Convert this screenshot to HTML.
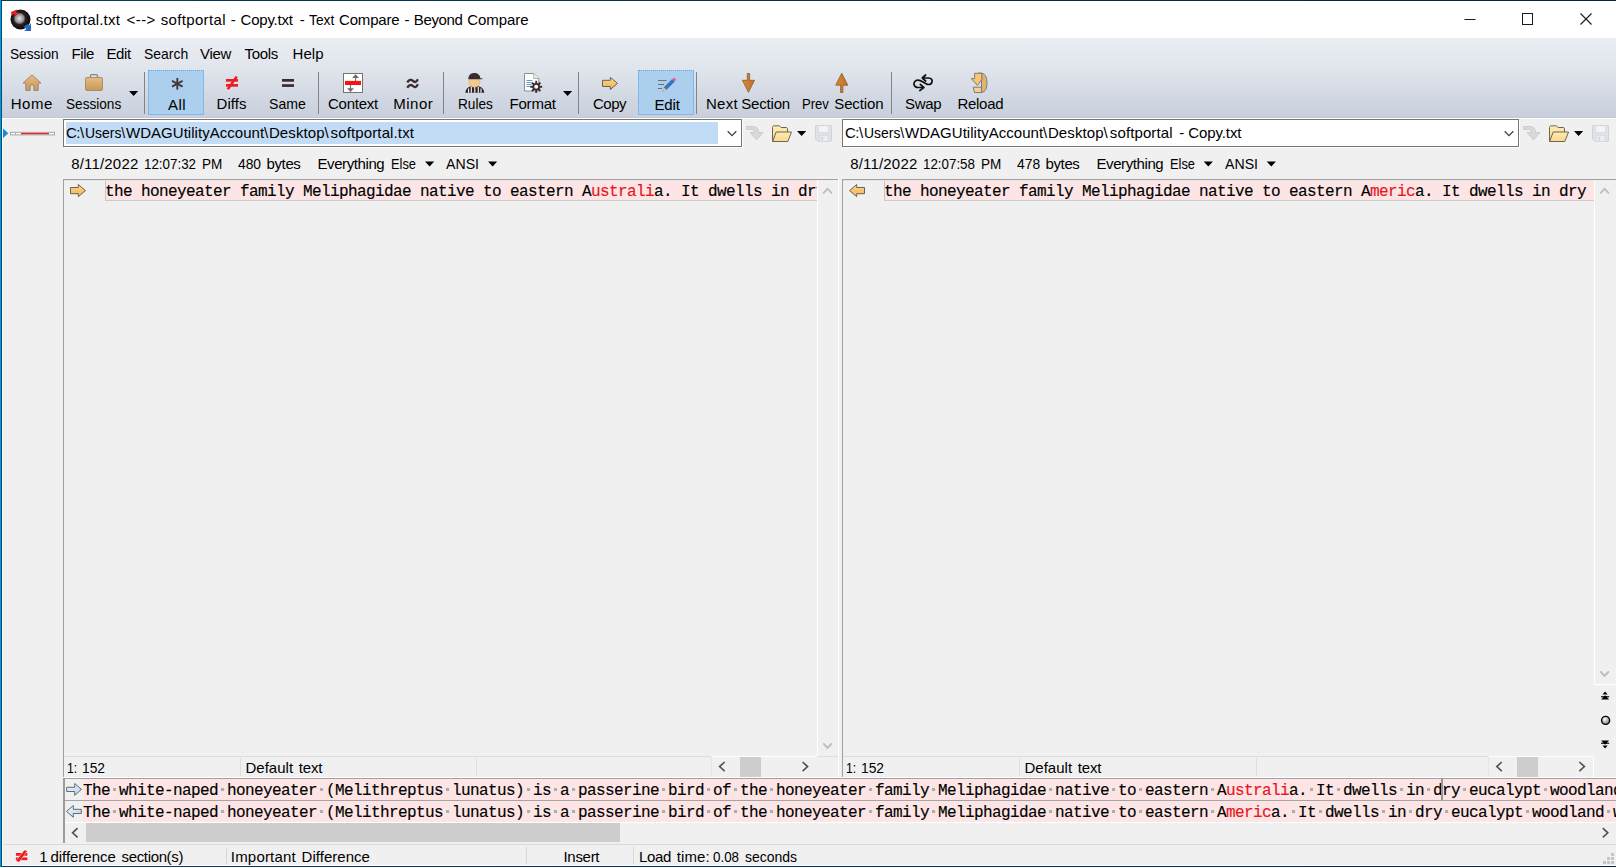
<!DOCTYPE html>
<html lang="en">
<head>
<meta charset="utf-8">
<title>softportal.txt &lt;--&gt; softportal - Copy.txt - Text Compare - Beyond Compare</title>
<style>
html,body{margin:0;padding:0;}
body{width:1616px;height:867px;overflow:hidden;background:#f0f0f0;position:relative;
  font-family:"Liberation Sans",sans-serif;font-size:15px;color:#000;}
.abs{position:absolute;}
.w{position:absolute;top:0;white-space:pre;}
.t{position:absolute;white-space:nowrap;line-height:20px;height:20px;}
.mono{font-family:"Liberation Mono",monospace;font-size:16px;letter-spacing:-0.6016px;-webkit-text-stroke:0.15px currentColor;white-space:pre;position:absolute;line-height:20px;height:20px;}
.red{color:#e8141e;}
.mono i{font-style:normal;color:#a6b1ad;position:relative;top:-1px;background:linear-gradient(#a6b1ad,#a6b1ad) no-repeat 3px 7px / 3px 3px;}
#frame-l{left:0;top:0;width:2px;height:867px;background:linear-gradient(90deg,#009adf 0,#009adf 1px,#0c4a6e 1px,#0c4a6e 2px);}
#frame-t{left:1px;top:0;width:1615px;height:1px;background:linear-gradient(90deg,#043c5c,#05224a);}
#frame-b{left:1px;top:866px;width:1615px;height:1px;background:linear-gradient(90deg,#043c5c,#05224a);}
#frame-w{left:2px;top:865px;width:1614px;height:1px;background:#fff;}
#frame-wl{left:2px;top:118px;width:1px;height:748px;background:#fff;}
#titlebar{left:2px;top:1px;width:1614px;height:37px;background:#fff;}
#chrome{left:2px;top:38px;width:1614px;height:80px;background:linear-gradient(#eaeef3 0%,#e4e8ee 28%,#d8dde6 60%,#c8cfdb 100%);}
#chrome-line{left:2px;top:117px;width:1614px;height:2px;background:linear-gradient(#c0c9d5 0,#c0c9d5 1px,#fff 1px,#fff 2px);}
.sep{position:absolute;top:72px;width:1px;height:42px;background:#7f838b;}
.tbtn-on{position:absolute;top:70px;height:45px;background:#abcfec;border:1px solid #7db9ee;border-top:1px dotted #5ba7e8;box-sizing:border-box;}
.lbl{position:absolute;white-space:nowrap;line-height:20px;height:20px;top:94px;font-size:15px;}
.box{position:absolute;background:#fff;border:1px solid #767676;box-sizing:border-box;height:28px;top:119px;box-shadow:1px 1px 0 #fff;}
.pane{position:absolute;background:#f0f0f0;}
.vline{position:absolute;width:1px;}
.hline{position:absolute;height:1px;}
.pink{position:absolute;background:#fde5e5;}
.sb{position:absolute;background:#f0f0f0;}
.thumb{position:absolute;background:#cdcdcd;}
svg{position:absolute;overflow:visible;}
</style>
</head>
<body>
<!-- window frame -->
<div class="abs" id="titlebar"></div>
<div class="abs" id="chrome"></div>
<div class="abs" id="chrome-line"></div>

<!-- title -->
<div class="t" id="title" style="left:0px;top:10px;"><span class="w" id="titlew0" style="left:35.71px;letter-spacing:0.184px;">softportal.txt</span> <span class="w" id="titlew1" style="left:126.53px;letter-spacing:0.443px;">&lt;--&gt;</span> <span class="w" id="titlew2" style="left:160.71px;letter-spacing:0.343px;">softportal</span> <span class="w" id="titlew3" style="left:230.78px;letter-spacing:0px;">-</span> <span class="w" id="titlew4" style="left:240.54px;letter-spacing:-0.219px;">Copy.txt</span> <span class="w" id="titlew5" style="left:299.65px;letter-spacing:0px;">-</span> <span class="w" id="titlew6" style="left:308.51px;transform-origin:0 0;transform:scaleX(0.9181);">Text</span> <span class="w" id="titlew7" style="left:339.07px;letter-spacing:-0.199px;">Compare</span> <span class="w" id="titlew8" style="left:404.61px;letter-spacing:0px;">-</span> <span class="w" id="titlew9" style="left:413.84px;letter-spacing:-0.378px;">Beyond</span> <span class="w" id="titlew10" style="left:467.3px;letter-spacing:-0.074px;">Compare</span></div>

<!-- menu -->
<div class="t" id="m1" style="left:9.77px;top:44px;transform-origin:0 0;transform:scaleX(0.9108);">Session</div>
<div class="t" id="m2" style="left:71.5px;top:44px;letter-spacing:-0.417px;">File</div>
<div class="t" id="m3" style="left:106.5px;top:44px;letter-spacing:-0.417px;">Edit</div>
<div class="t" id="m4" style="left:143.96px;top:44px;transform-origin:0 0;transform:scaleX(0.9304);">Search</div>
<div class="t" id="m5" style="left:200px;top:44px;letter-spacing:-0.333px;">View</div>
<div class="t" id="m6" style="left:244.5px;top:44px;letter-spacing:-0.312px;">Tools</div>
<div class="t" id="m7" style="left:292.5px;top:44px;letter-spacing:0.083px;">Help</div>

<!-- toolbar -->
<div class="tbtn-on" style="left:148px;width:56px;"></div>
<div class="tbtn-on" style="left:638px;width:56px;"></div>
<div class="sep" style="left:144px;"></div>
<div class="sep" style="left:318px;"></div>
<div class="sep" style="left:443px;"></div>
<div class="sep" style="left:578px;"></div>
<div class="sep" style="left:696px;"></div>
<div class="sep" style="left:891px;"></div>

<div class="lbl" id="l1" style="left:10.75px;letter-spacing:0.5px;">Home</div>
<div class="lbl" id="l2" style="left:65.98px;transform-origin:0 0;transform:scaleX(0.9069);">Sessions</div>
<div class="lbl" id="l3" style="left:168px;top:95px;letter-spacing:0.5px;">All</div>
<div class="lbl" id="l4" style="left:216.5px;letter-spacing:0.062px;">Diffs</div>
<div class="lbl" id="l5" style="left:269.2px;transform-origin:0 0;transform:scaleX(0.938);">Same</div>
<div class="lbl" id="l6" style="left:328px;letter-spacing:-0.25px;">Context</div>
<div class="lbl" id="l7" style="left:393.25px;letter-spacing:0.5px;">Minor</div>
<div class="lbl" id="l8" style="left:457.78px;transform-origin:0 0;transform:scaleX(0.9096);">Rules</div>
<div class="lbl" id="l9" style="left:509.5px;letter-spacing:-0.2px;">Format</div>
<div class="lbl" id="l10" style="left:593px;letter-spacing:-0.5px;">Copy</div>
<div class="lbl" id="l11" style="left:654.5px;top:95px;letter-spacing:-0.167px;">Edit</div>
<div class="lbl" id="l12" style="left:0px;"><span class="w" id="l12w0" style="left:705.97px;letter-spacing:0.247px;">Next</span> <span class="w" id="l12w1" style="left:741.25px;letter-spacing:-0.183px;">Section</span></div>
<div class="lbl" id="l13" style="left:0px;"><span class="w" id="l13w0" style="left:801.93px;transform-origin:0 0;transform:scaleX(0.8721);">Prev</span> <span class="w" id="l13w1" style="left:834.25px;letter-spacing:-0.128px;">Section</span></div>
<div class="lbl" id="l14" style="left:905px;letter-spacing:-0.33px;">Swap</div>
<div class="lbl" id="l15" style="left:957.5px;letter-spacing:-0.3px;">Reload</div>

<!-- path row -->
<div class="box" style="left:63px;width:679px;"></div>
<div class="abs" style="left:66px;top:122px;width:652px;height:22px;background:#c2dcf5;"></div>
<div class="t" id="p1" style="left:0px;top:123px;"><span class="w" id="p1w0" style="left:65.98px;letter-spacing:-0.433px;">C:\</span> <span class="w" id="p1w1" style="left:85.47px;transform-origin:0 0;transform:scaleX(0.9285);">Users\</span> <span class="w" id="p1w2" style="left:126.02px;letter-spacing:0.032px;">WDAGUtilityAccount\</span> <span class="w" id="p1w3" style="left:268.94px;letter-spacing:0.094px;">Desktop\</span> <span class="w" id="p1w4" style="left:330.58px;letter-spacing:0.128px;">softportal.txt</span></div>
<div class="box" style="left:842px;width:677px;"></div>
<div class="t" id="p2" style="left:0px;top:123px;"><span class="w" id="p2w0" style="left:844.98px;letter-spacing:-0.433px;">C:\</span> <span class="w" id="p2w1" style="left:864.47px;transform-origin:0 0;transform:scaleX(0.9285);">Users\</span> <span class="w" id="p2w2" style="left:905.02px;letter-spacing:0.032px;">WDAGUtilityAccount\</span> <span class="w" id="p2w3" style="left:1047.94px;letter-spacing:0.094px;">Desktop\</span> <span class="w" id="p2w4" style="left:1109.84px;letter-spacing:0.112px;">softportal</span> <span class="w" id="p2w5" style="left:1179.26px;letter-spacing:0px;">-</span> <span class="w" id="p2w6" style="left:1188.26px;letter-spacing:-0.102px;">Copy.txt</span></div>

<!-- info row -->
<div class="t" id="i1" style="left:0px;top:154px;"><span class="w" id="i1w0" style="left:71.14px;letter-spacing:0.191px;">8/11/2022</span> <span class="w" id="i1w1" style="left:144.33px;transform-origin:0 0;transform:scaleX(0.8908);">12:07:32</span> <span class="w" id="i1w2" style="left:201.76px;transform-origin:0 0;transform:scaleX(0.9021);">PM</span></div>
<div class="t" id="i2" style="left:0px;top:154px;"><span class="w" id="i2w0" style="left:238.08px;transform-origin:0 0;transform:scaleX(0.921);">480</span> <span class="w" id="i2w1" style="left:266.48px;letter-spacing:-0.362px;">bytes</span></div>
<div class="t" id="i3" style="left:0px;top:154px;"><span class="w" id="i3w0" style="left:317.47px;letter-spacing:-0.405px;">Everything</span> <span class="w" id="i3w1" style="left:390.88px;transform-origin:0 0;transform:scaleX(0.8578);">Else</span></div>
<div class="t" id="i4" style="left:446.18px;top:154px;transform-origin:0 0;transform:scaleX(0.9422);">ANSI</div>
<div class="t" id="i5" style="left:0px;top:154px;"><span class="w" id="i5w0" style="left:850.14px;letter-spacing:0.191px;">8/11/2022</span> <span class="w" id="i5w1" style="left:923.33px;transform-origin:0 0;transform:scaleX(0.8901);">12:07:58</span> <span class="w" id="i5w2" style="left:980.76px;transform-origin:0 0;transform:scaleX(0.9021);">PM</span></div>
<div class="t" id="i6" style="left:0px;top:154px;"><span class="w" id="i6w0" style="left:1017.08px;transform-origin:0 0;transform:scaleX(0.9255);">478</span> <span class="w" id="i6w1" style="left:1045.48px;letter-spacing:-0.362px;">bytes</span></div>
<div class="t" id="i7" style="left:0px;top:154px;"><span class="w" id="i7w0" style="left:1096.47px;letter-spacing:-0.405px;">Everything</span> <span class="w" id="i7w1" style="left:1169.88px;transform-origin:0 0;transform:scaleX(0.8578);">Else</span></div>
<div class="t" id="i8" style="left:1225.18px;top:154px;transform-origin:0 0;transform:scaleX(0.9422);">ANSI</div>

<!-- panes -->
<div class="hline" style="left:63px;top:179px;width:775px;background:#a0a0a0;"></div>
<div class="hline" style="left:64px;top:180px;width:753px;background:#e6e6e6;"></div>
<div class="vline" style="left:63px;top:179px;height:598px;background:#a0a0a0;"></div>
<div class="hline" style="left:842px;top:179px;width:774px;background:#a0a0a0;"></div>
<div class="hline" style="left:843px;top:180px;width:751px;background:#e6e6e6;"></div>
<div class="vline" style="left:842px;top:179px;height:598px;background:#a0a0a0;"></div>

<div class="pink" style="left:105px;top:181px;width:712px;height:20px;box-sizing:border-box;border-left:1px solid #c6c6c6;border-bottom:1px solid #cbcbcb;"></div>
<div class="mono" id="e1" style="left:105px;top:182px;width:712px;overflow:hidden;">the honeyeater family Meliphagidae native to eastern A<span class="red">ustrali</span>a. It dwells in dry eucalypt</div>
<div class="pink" style="left:884px;top:181px;width:710px;height:20px;box-sizing:border-box;border-left:1px solid #c6c6c6;border-bottom:1px solid #cbcbcb;"></div>
<div class="mono" id="e2" style="left:884px;top:182px;">the honeyeater family Meliphagidae native to eastern A<span class="red">meric</span>a. It dwells in dry</div>

<!-- pane status -->
<div class="hline" style="left:64px;top:756px;width:774px;background:#dcdcdc;"></div>
<div class="hline" style="left:843px;top:756px;width:751px;background:#dcdcdc;"></div>
<div class="t" id="s1" style="left:0px;top:758px;"><span class="w" id="s1w0" style="left:67.05px;transform-origin:0 0;transform:scaleX(0.8166);">1:</span> <span class="w" id="s1w1" style="left:81.96px;transform-origin:0 0;transform:scaleX(0.9194);">152</span></div>
<div class="t" id="s2" style="left:0px;top:758px;"><span class="w" id="s2w0" style="left:245.44px;letter-spacing:0.03px;">Default</span> <span class="w" id="s2w1" style="left:298.71px;letter-spacing:-0.133px;">text</span></div>
<div class="t" id="s3" style="left:0px;top:758px;"><span class="w" id="s3w0" style="left:846.05px;transform-origin:0 0;transform:scaleX(0.8166);">1:</span> <span class="w" id="s3w1" style="left:860.96px;transform-origin:0 0;transform:scaleX(0.9194);">152</span></div>
<div class="t" id="s4" style="left:0px;top:758px;"><span class="w" id="s4w0" style="left:1024.44px;letter-spacing:0.03px;">Default</span> <span class="w" id="s4w1" style="left:1077.71px;letter-spacing:-0.133px;">text</span></div>

<div class="hline" style="left:63px;top:777px;width:1553px;background:#fff;"></div>
<!-- bottom diff -->
<div class="pink" style="left:83px;top:779px;width:1533px;height:43px;"></div>
<div class="hline" style="left:63px;top:778px;width:1553px;background:#a0a0a0;"></div>
<div class="hline" style="left:64px;top:800px;width:1552px;background:#a3a5a4;"></div>
<div class="mono" id="b1" style="left:83px;top:781px;">The<i>·</i>white-naped<i>·</i>honeyeater<i>·</i>(Melithreptus<i>·</i>lunatus)<i>·</i>is<i>·</i>a<i>·</i>passerine<i>·</i>bird<i>·</i>of<i>·</i>the<i>·</i>honeyeater<i>·</i>family<i>·</i>Meliphagidae<i>·</i>native<i>·</i>to<i>·</i>eastern<i>·</i>A<span class="red">ustrali</span>a.<i>·</i>It<i>·</i>dwells<i>·</i>in<i>·</i>dry<i>·</i>eucalypt<i>·</i>woodland</div>
<div class="mono" id="b2" style="left:83px;top:803px;">The<i>·</i>white-naped<i>·</i>honeyeater<i>·</i>(Melithreptus<i>·</i>lunatus)<i>·</i>is<i>·</i>a<i>·</i>passerine<i>·</i>bird<i>·</i>of<i>·</i>the<i>·</i>honeyeater<i>·</i>family<i>·</i>Meliphagidae<i>·</i>native<i>·</i>to<i>·</i>eastern<i>·</i>A<span class="red">meric</span>a.<i>·</i>It<i>·</i>dwells<i>·</i>in<i>·</i>dry<i>·</i>eucalypt<i>·</i>woodland<i>·</i>w</div>


<!-- scrollbars -->
<div class="sb" style="left:817px;top:180px;width:21px;height:576px;border-left:1px solid #fff;box-sizing:border-box;"></div>
<div class="vline" style="left:838px;top:179px;height:598px;background:#fff;"></div>
<div class="sb" style="left:1594px;top:180px;width:22px;height:505px;border-left:1px solid #fff;border-bottom:1px solid #fff;box-sizing:border-box;"></div>
<div class="sb" style="left:711px;top:756px;width:106px;height:21px;border-top:1px solid #fff;border-left:1px solid #e6e6e6;box-sizing:border-box;"></div>
<div class="thumb" style="left:740px;top:757px;width:21px;height:20px;"></div>
<div class="sb" style="left:1488px;top:756px;width:106px;height:21px;border-top:1px solid #fff;border-left:1px solid #e6e6e6;border-right:1px solid #fff;box-sizing:border-box;"></div>
<div class="thumb" style="left:1517px;top:757px;width:21px;height:20px;"></div>
<div class="vline" style="left:240px;top:758px;height:18px;background:#dedede;"></div>
<div class="vline" style="left:1019px;top:758px;height:18px;background:#dedede;"></div>
<div class="vline" style="left:1256px;top:758px;height:18px;background:#dedede;"></div>
<div class="vline" style="left:476px;top:758px;height:18px;background:#dedede;"></div>
<!-- bottom scrollbar -->
<div class="hline" style="left:65px;top:822px;width:1551px;background:#fff;"></div>
<div class="thumb" style="left:86px;top:823px;width:534px;height:19px;"></div>
<div class="abs" style="left:63px;top:778px;width:2px;height:65px;background:#9c9c9c;"></div>
<!-- status separators -->
<div class="vline" style="left:226px;top:847px;height:17px;background:#d7d7d7;"></div>
<div class="vline" style="left:526px;top:847px;height:17px;background:#d7d7d7;"></div>
<div class="vline" style="left:633px;top:847px;height:17px;background:#d7d7d7;"></div>
<!-- status bar -->
<div class="hline" style="left:2px;top:844px;width:1614px;background:#dadada;"></div>
<div class="t" id="st1" style="left:0px;top:847px;"><span class="w" id="st1w0" style="left:39.24px;letter-spacing:0px;">1</span> <span class="w" id="st1w1" style="left:50.39px;letter-spacing:-0.023px;">difference</span> <span class="w" id="st1w2" style="left:121.58px;letter-spacing:-0.356px;">section(s)</span></div>
<div class="t" id="st2" style="left:0px;top:847px;"><span class="w" id="st2w0" style="left:230.84px;letter-spacing:0.188px;">Important</span> <span class="w" id="st2w1" style="left:301.58px;letter-spacing:0.023px;">Difference</span></div>
<div class="t" id="st3" style="left:563.5px;top:847px;letter-spacing:-0.3px;">Insert</div>
<div class="t" id="st4" style="left:0px;top:847px;"><span class="w" id="st4w0" style="left:638.95px;letter-spacing:-0.35px;">Load</span> <span class="w" id="st4w1" style="left:676.66px;letter-spacing:0.134px;">time:</span> <span class="w" id="st4w2" style="left:713.28px;transform-origin:0 0;transform:scaleX(0.8925);">0.08</span> <span class="w" id="st4w3" style="left:744.74px;transform-origin:0 0;transform:scaleX(0.9321);">seconds</span></div>

<!-- ICONS: toolbar -->
<svg id="ico-toolbar" width="1616" height="120" style="left:0;top:0" viewBox="0 0 1616 120">
<defs>
<linearGradient id="gTan" x1="0" y1="0" x2="0" y2="1"><stop offset="0" stop-color="#e9bd7f"/><stop offset="1" stop-color="#c4975a"/></linearGradient>
<linearGradient id="gYel" x1="0" y1="0" x2="0" y2="1"><stop offset="0" stop-color="#fdd88a"/><stop offset="1" stop-color="#f3b152"/></linearGradient>
<linearGradient id="gOr" x1="0" y1="0" x2="1" y2="0"><stop offset="0" stop-color="#d98a3c"/><stop offset="1" stop-color="#c06f22"/></linearGradient>
<radialGradient id="gDisc" cx="0.45" cy="0.45" r="0.5"><stop offset="0" stop-color="#e8e8e8"/><stop offset="0.45" stop-color="#8a8a8a"/><stop offset="0.6" stop-color="#2a2022"/><stop offset="1" stop-color="#120c0e"/></radialGradient>
</defs>
<!-- app icon -->
<circle cx="20.5" cy="19.5" r="10" fill="url(#gDisc)"/>
<path d="M11 12 l6 -2.5 l-1 2.5 l3 1 l-4 3 l-1 -2 l-2.5 2 z" fill="#e0202a"/>
<path d="M31 23 l0 8 l-7 0 l2.5 -2 l-3 -2 l4 -3 l1.5 1.5 z" fill="#2468c0"/>
<!-- window controls -->
<path d="M1464.500 19.5 h11" stroke="#1a1a1a" stroke-width="1" fill="none"/>
<rect x="1522.500" y="13.500" width="10" height="11" fill="none" stroke="#1a1a1a" stroke-width="1"/>
<path d="M1580.500 13.500 l11 11 M1591.500 13.500 l-11 11" stroke="#1a1a1a" stroke-width="1.100" fill="none"/>
<!-- home -->
<path d="M23 83 L32 74.800 L41 83 L38.200 83 L38.200 90.500 L33.800 90.500 L33.800 85 L30.200 85 L30.200 90.500 L25.800 90.500 L25.800 83 Z" fill="url(#gTan)" stroke="#9b8566" stroke-width="0.900" stroke-linejoin="round"/>
<!-- briefcase -->
<rect x="90.500" y="74.600" width="7" height="4" rx="1.200" fill="none" stroke="#8c8478" stroke-width="1.300"/>
<rect x="85.500" y="77.500" width="17" height="13" rx="1.500" fill="url(#gTan)" stroke="#a08a68" stroke-width="0.900"/>
<!-- dropdown sessions -->
<path d="M129 91 h9.200 l-4.600 5 z" fill="#000"/>
<!-- asterisk -->
<g stroke="#46363a" stroke-width="1.900" stroke-linecap="butt" fill="none">
<path d="M177.300 78 v11.600"/><path d="M172 80.900 l10.600 5.800"/><path d="M182.600 80.900 l-10.600 5.800"/>
</g>
<!-- not equal -->
<g fill="#ee1c24"><rect x="226" y="79" width="12" height="2.700"/><rect x="226" y="84" width="12" height="2.700"/>
<path d="M235.500 76 l2.300 1 l-8.800 12.800 l-2.300 -1 z"/></g>
<!-- equal -->
<g fill="#3b2b30"><rect x="282" y="79" width="12" height="2.700"/><rect x="282" y="84.200" width="12" height="2.700"/></g>
<!-- context -->
<rect x="343.500" y="73.500" width="19" height="19" fill="#fff" stroke="#747474" stroke-width="1"/>
<rect x="345" y="80.900" width="16" height="4.100" fill="#f51414"/>
<g stroke="#6c6c6c" stroke-width="1.100" fill="#6c6c6c">
<path d="M355.600 81 v-5"/><path d="M352.100 78.100 l3.500 -3.900 l3.500 3.900 z" stroke="none"/>
<path d="M350.500 85 v5"/><path d="M347 88.200 l3.500 3.900 l3.500 -3.900 z" stroke="none"/>
</g>
<!-- approx -->
<g stroke="#3b2d31" stroke-width="2.300" fill="none" stroke-linecap="butt">
<path d="M407.300 82.600 c1.600 -3.200 4 -3.300 5.600 -1.700 c1.600 1.600 3.400 1.700 5 -1.700"/>
<path d="M407.300 87.700 c1.600 -3.200 4 -3.300 5.600 -1.700 c1.600 1.600 3.400 1.700 5 -1.700"/>
</g>
<!-- referee -->
<path d="M465.300 92.800 c0.500 -4.500 3.500 -6 6.500 -6.500 h6 c3 0.500 6 2 6.500 6.500 z" fill="#2e2226"/>
<g stroke="#fff" stroke-width="1.100"><path d="M468.600 88.500 v4.300"/><path d="M471.300 87 v5.800"/><path d="M474.800 86.500 v6.300"/><path d="M478.300 87 v5.800"/><path d="M481 88.500 v4.300"/></g>
<ellipse cx="474.300" cy="82.300" rx="5.600" ry="5" fill="#f4c88e" stroke="#d9a868" stroke-width="0.500"/>
<path d="M468.300 79.300 c0 -4.300 2.700 -6.300 6 -6.300 c3.300 0 6 2 6 5.300 l2 0 l0 1 z" fill="#3a2c32"/>
<!-- format: doc + gear -->
<path d="M524.500 73.500 h9.300 l5 5 v12.500 h-14.300 z" fill="#fff" stroke="#8e8e90" stroke-width="1"/>
<path d="M533.800 73.500 v5 h5" fill="#eceef1" stroke="#9a9a9c" stroke-width="0.800"/>
<g stroke="#4f8fd0" stroke-width="0.900"><path d="M526.500 80.500 h6"/><path d="M526.500 82.500 h5"/><path d="M526.500 84.500 h5"/><path d="M526.500 86.500 h4"/></g>
<g transform="translate(536.200 86.800)">
<g stroke="#3a2c30" stroke-width="1.900"><path d="M0 -6 V6"/><path d="M-6 0 H6"/><path d="M-4.200 -4.200 L4.200 4.200"/><path d="M4.200 -4.200 L-4.200 4.200"/></g>
<circle r="3.800" fill="#3a2c30"/><circle r="2" fill="#f7f7f9"/></g>
<!-- dropdown format -->
<path d="M563 91 h9.200 l-4.600 5 z" fill="#000"/>
<!-- copy arrow -->
<path d="M602.500 80.300 h7.800 v-3 l7.200 6.100 l-7.200 6.100 v-3 h-7.800 z" fill="url(#gYel)" stroke="#66625e" stroke-width="1" stroke-linejoin="round"/>
<!-- pencil (edit) -->
<g stroke="#6a6468" stroke-width="0.900"><path d="M658 80.500 h8.500"/><path d="M658 84.500 h6"/><path d="M658 88.500 h4"/></g>
<path d="M672.200 79.200 l2.400 2.200 l-8.300 8.300 l-2.400 -2.200 z" fill="#3576c4" stroke="#2a5a9a" stroke-width="0.400"/>
<path d="M672.200 79.200 l1.400 -1.300 c0.900 -0.500 2.800 1.200 2.200 2.200 l-1.200 1.300 z" fill="#f0579c"/>
<path d="M663.900 87.500 l2.400 2.200 l-4 1.900 z" fill="#f0b868"/>
<path d="M662.500 91.500 l1.100 -0.400 l-0.700 -0.700 z" fill="#333"/>
<!-- next section -->
<path d="M747.300 73.500 h2.300 v6.800 h4.900 l-6.050 12 l-6.050 -12 h4.900 z" fill="url(#gOr)" stroke="#8e5a2a" stroke-width="0.800" stroke-linejoin="round"/>
<!-- prev section -->
<path d="M840.600 92.500 h2.300 v-7.300 h4.900 l-6.050 -12 l-6.050 12 h4.900 z" fill="url(#gOr)" stroke="#8e5a2a" stroke-width="0.800" stroke-linejoin="round"/>
<!-- swap -->
<g stroke="#0e0e0e" stroke-width="1.700" fill="none" stroke-linecap="round" stroke-linejoin="round">
<path d="M923 78 L928.500 78 C931.500 78 932.500 80 932 82 C931.500 84.500 928.500 85 926.500 84 C923 82.300 920.500 80 917.800 80.200 C915 80.400 913.500 82.500 914 84.500 C914.500 86.700 916.500 87.500 918.500 87.500 L923.500 87.500"/>
<path d="M925.600 75 L922.300 78 L925.600 81"/>
<path d="M920.300 84.300 L923.800 87.500 L919.800 90.600"/>
</g>
<!-- reload -->
<path d="M978 73.300 L982 73.300 C986 74 987 79 987 83 C987 88 985.500 92 981.500 92.500 L981.500 73.300 Z" fill="#e3b56c" stroke="#6d7383" stroke-width="0.900" stroke-linejoin="round"/>
<path d="M974.600 73.300 L981.800 73.300 L981.800 78.600 L982.600 78.600 L977.400 85.300 L971.300 78.600 L974.600 78.600 Z" fill="#fbc572" stroke="#6d7383" stroke-width="0.900" stroke-linejoin="round"/>
<path d="M973.200 87.200 L981.500 87.200 L981.500 92.500 L974.500 92.500 Z" fill="#fbd084" stroke="#6d7383" stroke-width="0.900" stroke-linejoin="round"/>
</svg>

<!-- ICONS: body -->
<svg id="ico-body" width="1616" height="867" style="left:0;top:0" viewBox="0 0 1616 867">
<defs>
<linearGradient id="gFold" x1="0" y1="0" x2="0" y2="1"><stop offset="0" stop-color="#fdebb5"/><stop offset="1" stop-color="#f7d88c"/></linearGradient>
<linearGradient id="gBlu" x1="0" y1="0" x2="1" y2="1"><stop offset="0" stop-color="#eef6fd"/><stop offset="1" stop-color="#b5d3f0"/></linearGradient>
<radialGradient id="gBall" cx="0.4" cy="0.35" r="0.7"><stop offset="0" stop-color="#ffffff"/><stop offset="1" stop-color="#7a7a7a"/></radialGradient>
<g id="chevD"><path d="M0 0 l4.300 4.300 l4.300 -4.300" fill="none" stroke-width="1.300"/></g>
<g id="greyArrow"><path d="M0.500 1.500 h6.500 c4 0 5.500 2.500 5.500 6 h4.500 l-6.500 7.500 l-6.500 -7.500 h4.300 c0 -2 -0.800 -3 -2.800 -3 h-5 z" fill="#d9d9d9" stroke="#c4c4c4" stroke-width="0.700"/></g>
<g id="folder">
<path d="M0.500 16.500 v-14 c0 -1 0.700 -1.700 1.700 -1.700 h4.600 c1 0 1.700 0.700 2.200 1.700 h5 c1 0 1.500 0.500 1.500 1.500 v3 " fill="url(#gFold)" stroke="#6f6450" stroke-width="1"/>
<path d="M0.600 16.500 l3.600 -9.500 h15.300 l-3.700 9.500 z" fill="url(#gFold)" stroke="#6f6450" stroke-width="1" stroke-linejoin="round"/>
</g>
<g id="save">
<path d="M0.500 1.500 c0 -0.600 0.400 -1 1 -1 h14 c0.600 0 1 0.400 1 1 v14 c0 0.600 -0.400 1 -1 1 h-12.500 l-2.500 -2.500 z" fill="#dfe3e8" stroke="#cfd3d8" stroke-width="1"/>
<rect x="3.500" y="0.800" width="10" height="6.700" fill="#f3f4f6" stroke="#d2d6db" stroke-width="0.600"/>
<rect x="4.500" y="10.500" width="8.500" height="6" fill="#eceef1" stroke="#d2d6db" stroke-width="0.600"/>
<rect x="6" y="11.800" width="2.200" height="3.800" fill="#d5d9de"/>
</g>
<g id="tri"><path d="M0 0 h9.200 l-4.600 5 z" fill="#000"/></g>
</defs>
<!-- gutter thumbnail -->
<path d="M3 128.500 l5.300 4.800 l-5.300 4.800 z" fill="#1e86d6"/>
<rect x="10.500" y="132.300" width="44" height="2.600" fill="#fff" stroke="#a6a6a6" stroke-width="1"/>
<rect x="21" y="132.900" width="28" height="1.400" fill="#e8262c"/>
<rect x="15" y="132.800" width="1" height="1.600" fill="#a6a6a6"/>
<!-- path row icons left -->
<use href="#chevD" x="727.700" y="131.300" stroke="#404040"/>
<use href="#greyArrow" x="746" y="125"/>
<use href="#folder" x="772" y="125"/>
<use href="#tri" x="797" y="131"/>
<use href="#save" x="815" y="125"/>
<!-- path row icons right -->
<use href="#chevD" x="1504.700" y="131.300" stroke="#404040"/>
<use href="#greyArrow" x="1523" y="125"/>
<use href="#folder" x="1549" y="125"/>
<use href="#tri" x="1574" y="131"/>
<use href="#save" x="1592" y="125"/>
<!-- info row dropdowns -->
<use href="#tri" x="425" y="161.500"/>
<use href="#tri" x="488" y="161.500"/>
<use href="#tri" x="1203.700" y="161.500"/>
<use href="#tri" x="1266.700" y="161.500"/>
<!-- pane arrows -->
<path d="M70.500 187.500 h7.800 v-3 l7.200 6.100 l-7.200 6.100 v-3 h-7.800 z" fill="url(#gYel)" stroke="#66625e" stroke-width="1" stroke-linejoin="round"/>
<path d="M864.500 187.500 h-7.800 v-3 l-7.200 6.100 l7.200 6.100 v-3 h7.800 z" fill="url(#gYel)" stroke="#66625e" stroke-width="1" stroke-linejoin="round"/>
<!-- pane scrollbar chevrons -->
<path d="M823.300 193.300 l4.300 -4.600 l4.300 4.600" fill="none" stroke="#bcbcbc" stroke-width="1.800"/>
<path d="M823.300 743.300 l4.300 4.600 l4.300 -4.600" fill="none" stroke="#bcbcbc" stroke-width="1.800"/>
<path d="M1600.300 193.300 l4.300 -4.600 l4.300 4.600" fill="none" stroke="#bcbcbc" stroke-width="1.800"/>
<path d="M1600.300 671.300 l4.300 4.600 l4.300 -4.600" fill="none" stroke="#bcbcbc" stroke-width="1.800"/>
<!-- h scroll arrows -->
<g fill="none" stroke="#505050" stroke-width="1.600">
<path d="M724.600 762 l-5 4.600 l5 4.600"/><path d="M802.600 762 l5 4.600 l-5 4.600"/>
<path d="M1501.800 762 l-5 4.600 l5 4.600"/><path d="M1579.400 762 l5 4.600 l-5 4.600"/>
<path d="M77.600 828.200 l-5 4.600 l5 4.600"/><path d="M1602.800 828.200 l5 4.600 l-5 4.600"/>
</g>
<!-- nav icons -->
<g fill="#000">
<path d="M1605.100 691.600 l2.600 3 h-5.200 z"/><path d="M1605.100 695.200 l4 4.200 h-8 z"/><rect x="1601" y="696.200" width="8.200" height="1.100"/>
<path d="M1605.100 748.400 l2.600 -3 h-5.200 z"/><path d="M1605.100 744.800 l4 -4.200 h-8 z"/><rect x="1601" y="742.700" width="8.200" height="1.100"/>
</g>
<circle cx="1605.600" cy="720.400" r="4" fill="url(#gBall)" stroke="#000" stroke-width="1.400"/>
<!-- bottom diff arrows -->
<path d="M66.700 787.300 h8 v-3.800 l6.800 5.900 l-6.800 5.900 v-3.800 h-8 z" fill="url(#gBlu)" stroke="#5a5a5a" stroke-width="0.900" stroke-linejoin="round"/>
<path d="M81.300 809.300 h-8 v-3.800 l-6.800 5.900 l6.800 5.900 v-3.800 h8 z" fill="url(#gBlu)" stroke="#5a5a5a" stroke-width="0.900" stroke-linejoin="round"/>
<!-- caret -->
<rect x="1441" y="779" width="2" height="21" fill="#959595"/>
<!-- status not-equal -->
<g fill="#ee1c24" stroke="#fff" stroke-width="0.800" paint-order="stroke"><rect x="15.800" y="853" width="11.600" height="2.800"/><rect x="15.800" y="857.400" width="11.600" height="2.800"/>
<path d="M24.300 850.200 l2.900 0.900 l-8.200 10.900 l-2.900 -0.900 z"/></g>
<!-- grip -->
<g fill="#bfbfbf">
<rect x="1611.100" y="853.100" width="2.800" height="2.800"/>
<rect x="1607.100" y="857.100" width="2.800" height="2.800"/><rect x="1611.100" y="857.100" width="2.800" height="2.800"/>
<rect x="1603.100" y="861.100" width="2.800" height="2.800"/><rect x="1607.100" y="861.100" width="2.800" height="2.800"/><rect x="1611.100" y="861.100" width="2.800" height="2.800"/>
</g>
</svg>

<div class="abs" id="frame-l"></div>
<div class="abs" id="frame-t"></div>
<div class="abs" id="frame-w"></div>
<div class="abs" id="frame-wl"></div>
<div class="abs" id="frame-b"></div>
</body>
</html>
